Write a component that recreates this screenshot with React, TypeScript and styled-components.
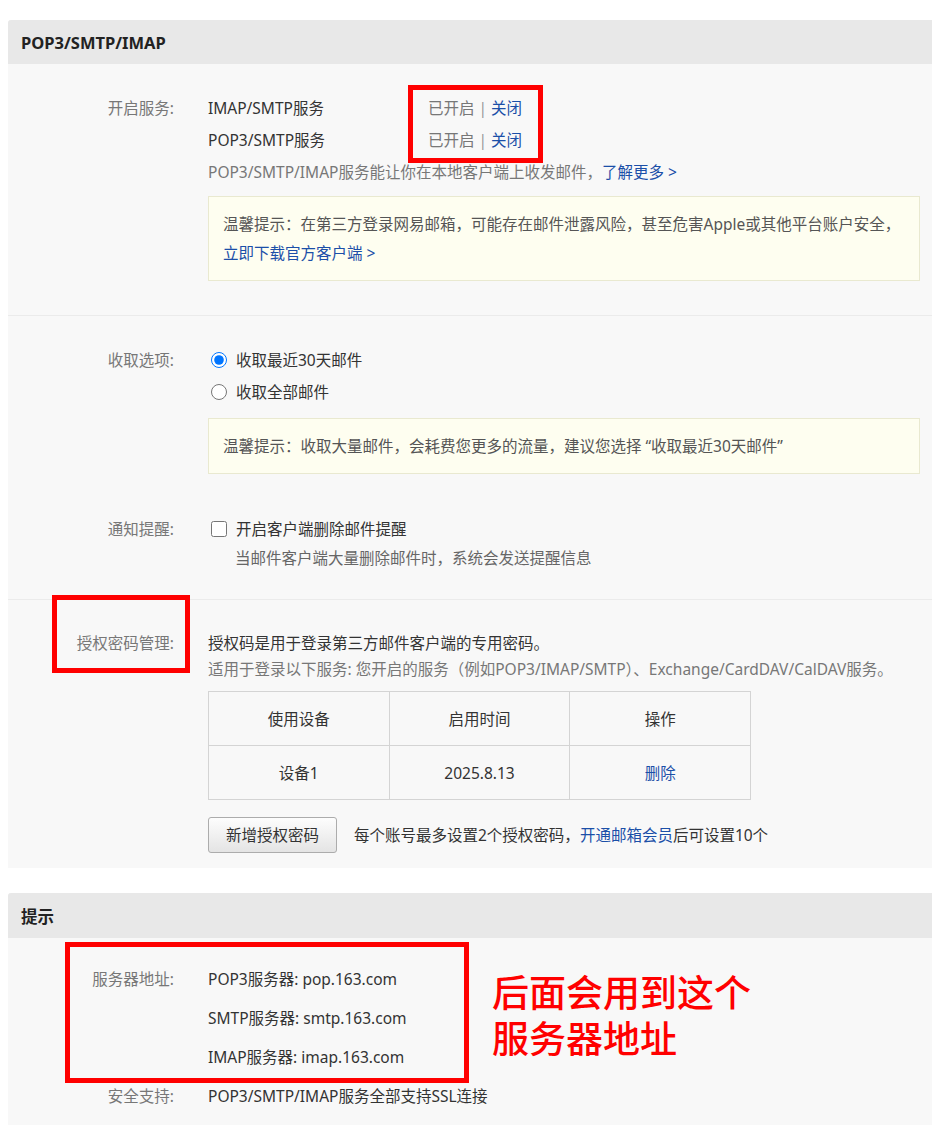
import styled, { createGlobalStyle } from 'styled-components'

const Cores = {
  fundo: '#ffffff',
  painel: '#f8f8f8',
  cabecalho: '#e8e8e8',
  divisor: '#ebebeb',
  texto: '#333333',
  rotulo: '#777777',
  cinza: '#777777',
  link: '#1b4fa8',
  aviso: '#fefef0',
  avisoBorda: '#e9e9d0',
  borda: '#d4d4d4',
  vermelho: '#ff0000',
}

const GlobalStyle = createGlobalStyle`
  body {
    margin: 0;
    background: ${Cores.fundo};
    font-family: "Noto Sans", "Noto Sans CJK SC", sans-serif;
    font-size: 15.5px;
    color: ${Cores.texto};
  }
`

const Page = styled.div`
  padding: 20px 0 0 8px;
`

const Panel = styled.div<{ $last?: boolean }>`
  background: ${Cores.painel};
  border-radius: 3px 0 0 0;
  margin-bottom: ${(p) => (p.$last ? '0' : '25px')};
`

const PanelHeader = styled.div<{ $h: number }>`
  height: ${(p) => p.$h}px;
  display: flex;
  align-items: center;
  padding-left: 13px;
  background: ${Cores.cabecalho};
  font-size: 16.5px;
  font-weight: bold;
  color: #222;
  border-radius: 3px 0 0 0;
`

const Section = styled.div<{ $pt: number; $pb: number; $divider?: boolean }>`
  position: relative;
  padding: ${(p) => p.$pt}px 12px ${(p) => p.$pb}px 0;
  border-top: ${(p) => (p.$divider ? `1px solid ${Cores.divisor}` : 'none')};
`

const Row = styled.div<{ $lh: number; $mt?: number }>`
  display: flex;
  line-height: ${(p) => p.$lh}px;
  margin-top: ${(p) => p.$mt || 0}px;
`

const Label = styled.div`
  position: relative;
  width: 166px;
  flex-shrink: 0;
  text-align: right;
  color: ${Cores.rotulo};
`

const Content = styled.div`
  margin-left: 34px;
  flex: 1;
`

const ServiceGrid = styled.div`
  display: grid;
  grid-template-columns: 220px auto;
  align-items: center;
`

const StatusCol = styled.div`
  position: relative;
  color: ${Cores.rotulo};
`

const Bar = styled.span`
  color: #999;
  margin: 0 4px;
`

const Link = styled.a`
  color: ${Cores.link};
  text-decoration: none;
  cursor: pointer;
`

const Muted = styled.div<{ $color?: string }>`
  color: ${(p) => p.$color || Cores.cinza};
  white-space: nowrap;
`

const Notice = styled.div<{ $mt: number }>`
  margin-top: ${(p) => p.$mt}px;
  padding: 13px 14px 12px;
  line-height: 29px;
  background: ${Cores.aviso};
  border: 1px solid ${Cores.avisoBorda};
  color: #555;
  white-space: nowrap;
  overflow: hidden;
`

const Choice = styled.label`
  display: flex;
  align-items: center;
  gap: 9px;
  color: ${Cores.texto};

  input {
    width: 16px;
    height: 16px;
    margin: 0 0 0 3px;
  }
`

const SubNote = styled.div`
  line-height: 26px;
  padding-left: 27px;
  color: #666;
`

const Table = styled.table`
  margin-top: 9px;
  border-collapse: collapse;
  width: 543px;

  td,
  th {
    width: 181px;
    height: 53px;
    padding: 0;
    border: 1px solid ${Cores.borda};
    text-align: center;
    font-weight: normal;
    color: ${Cores.texto};
  }
`

const Actions = styled.div`
  margin-top: 17px;
  display: flex;
  align-items: center;
  gap: 17px;
`

const Button = styled.button`
  width: 129px;
  height: 36px;
  border: 1px solid #acacac;
  border-radius: 3px;
  background: linear-gradient(#fdfdfd, #e4e4e4);
  font: inherit;
  color: ${Cores.texto};
  cursor: pointer;
`

const RedBox = styled.div<{ $top: number; $left: number; $w: number; $h: number }>`
  position: absolute;
  top: ${(p) => p.$top}px;
  left: ${(p) => p.$left}px;
  width: ${(p) => p.$w}px;
  height: ${(p) => p.$h}px;
  border: 5px solid ${Cores.vermelho};
  box-sizing: border-box;
  pointer-events: none;
`

const Annotation = styled.div`
  position: absolute;
  top: 30px;
  left: 484px;
  font-family: "Noto Sans CJK SC", sans-serif;
  font-size: 37px;
  line-height: 46px;
  font-weight: 500;
  color: ${Cores.vermelho};
`

const services = ['IMAP/SMTP服务', 'POP3/SMTP服务']

const servers = [
  'POP3服务器: pop.163.com',
  'SMTP服务器: smtp.163.com',
  'IMAP服务器: imap.163.com',
]

const App = () => {
  return (
    <Page>
      <GlobalStyle />
      <Panel>
        <PanelHeader $h={44}>POP3/SMTP/IMAP</PanelHeader>

        <Section $pt={28} $pb={34}>
          <Row $lh={32}>
            <Label>开启服务:</Label>
            <Content>
              <ServiceGrid>
                <div>
                  {services.map((s) => (
                    <div key={s}>{s}</div>
                  ))}
                </div>
                <StatusCol>
                  {services.map((s) => (
                    <div key={s}>
                      已开启<Bar>|</Bar>
                      <Link>关闭</Link>
                    </div>
                  ))}
                  <RedBox $top={-7} $left={-20} $w={135} $h={78} />
                </StatusCol>
              </ServiceGrid>
              <Muted>
                POP3/SMTP/IMAP服务能让你在本地客户端上收发邮件，<Link>了解更多 &gt;</Link>
              </Muted>
              <Notice $mt={8}>
                温馨提示：在第三方登录网易邮箱，可能存在邮件泄露风险，甚至危害Apple或其他平台账户安全，
                <br />
                <Link>立即下载官方客户端 &gt;</Link>
              </Notice>
            </Content>
          </Row>
        </Section>

        <Section $pt={28} $pb={28} $divider>
          <Row $lh={32}>
            <Label>收取选项:</Label>
            <Content>
              <Choice>
                <input type="radio" name="range" defaultChecked />
                收取最近30天邮件
              </Choice>
              <Choice>
                <input type="radio" name="range" />
                收取全部邮件
              </Choice>
              <Notice $mt={10}>
                温馨提示：收取大量邮件，会耗费您更多的流量，建议您选择 “收取最近30天邮件”
              </Notice>
            </Content>
          </Row>
          <Row $lh={32} $mt={39}>
            <Label>通知提醒:</Label>
            <Content>
              <Choice>
                <input type="checkbox" />
                开启客户端删除邮件提醒
              </Choice>
              <SubNote>当邮件客户端大量删除邮件时，系统会发送提醒信息</SubNote>
            </Content>
          </Row>
        </Section>

        <Section $pt={30} $pb={15} $divider>
          <Row $lh={26}>
            <Label>
              授权密码管理:
              <RedBox $top={-35} $left={44} $w={138} $h={78} />
            </Label>
            <Content>
              <div>授权码是用于登录第三方邮件客户端的专用密码。</div>
              <Muted>
                适用于登录以下服务: 您开启的服务（例如POP3/IMAP/SMTP）、Exchange/CardDAV/CalDAV服务。
              </Muted>
              <Table>
                <thead>
                  <tr>
                    <th>使用设备</th>
                    <th>启用时间</th>
                    <th>操作</th>
                  </tr>
                </thead>
                <tbody>
                  <tr>
                    <td>设备1</td>
                    <td>2025.8.13</td>
                    <td>
                      <Link>删除</Link>
                    </td>
                  </tr>
                </tbody>
              </Table>
              <Actions>
                <Button>新增授权密码</Button>
                <span>
                  每个账号最多设置2个授权密码，<Link>开通邮箱会员</Link>后可设置10个
                </span>
              </Actions>
            </Content>
          </Row>
        </Section>
      </Panel>

      <Panel $last>
        <PanelHeader $h={45}>提示</PanelHeader>
        <Section $pt={22} $pb={10}>
          <Row $lh={39}>
            <Label>服务器地址:</Label>
            <Content>
              {servers.map((s) => (
                <div key={s}>{s}</div>
              ))}
            </Content>
          </Row>
          <Row $lh={39}>
            <Label>安全支持:</Label>
            <Content>POP3/SMTP/IMAP服务全部支持SSL连接</Content>
          </Row>
          <RedBox $top={4} $left={57} $w={404} $h={141} />
          <Annotation>
            后面会用到这个
            <br />
            服务器地址
          </Annotation>
        </Section>
      </Panel>
    </Page>
  )
}

export default App
